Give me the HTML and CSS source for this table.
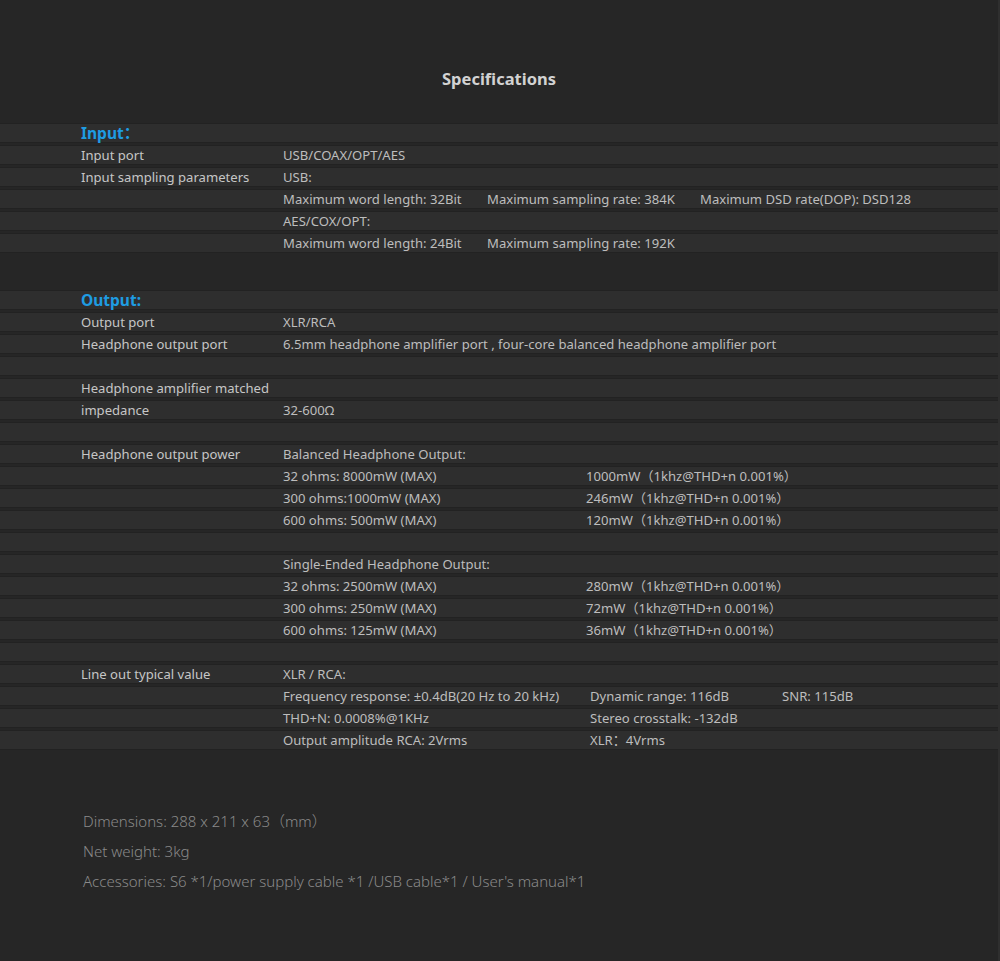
FILE: index.html
```html
<!DOCTYPE html>
<html lang="en">
<head>
  <meta charset="UTF-8" />
  <meta name="viewport" content="width=device-width, initial-scale=1.0" />
  <title>Specifications</title>
  <link rel="stylesheet" href="styles.css">
</head>
<body>
  <div class="page">
    <h1 class="title">Specifications</h1>

    <section class="spec">
      <div class="row"><span class="label head">Input：</span></div>
      <div class="row"><span class="label">Input port</span><span class="val">USB/COAX/OPT/AES</span></div>
      <div class="row"><span class="label">Input sampling parameters</span><span class="val">USB:</span></div>
      <div class="row">
        <span class="label"></span>
        <div class="val cols cols-usb">
          <span>Maximum word length: 32Bit</span>
          <span>Maximum sampling rate: 384K</span>
          <span>Maximum DSD rate(DOP): DSD128</span>
        </div>
      </div>
      <div class="row"><span class="label"></span><span class="val">AES/COX/OPT:</span></div>
      <div class="row">
        <span class="label"></span>
        <div class="val cols cols-usb">
          <span>Maximum word length: 24Bit</span>
          <span>Maximum sampling rate: 192K</span>
        </div>
      </div>
    </section>

    <section class="spec">
      <div class="row"><span class="label head">Output:</span></div>
      <div class="row"><span class="label">Output port</span><span class="val">XLR/RCA</span></div>
      <div class="row"><span class="label">Headphone output port</span><span class="val">6.5mm headphone amplifier port , four-core balanced headphone amplifier port</span></div>
      <div class="row"></div>
      <div class="row"><span class="label">Headphone amplifier matched</span></div>
      <div class="row"><span class="label">impedance</span><span class="val">32-600Ω</span></div>
      <div class="row"></div>

      <div class="row"><span class="label">Headphone output power</span><span class="val">Balanced Headphone Output:</span></div>
      <div class="row"><span class="label"></span><div class="val cols cols-pow"><span>32 ohms: 8000mW (MAX)</span><span>1000mW（1khz@THD+n 0.001%）</span></div></div>
      <div class="row"><span class="label"></span><div class="val cols cols-pow"><span>300 ohms:1000mW (MAX)</span><span>246mW（1khz@THD+n 0.001%）</span></div></div>
      <div class="row"><span class="label"></span><div class="val cols cols-pow"><span>600 ohms: 500mW (MAX)</span><span>120mW（1khz@THD+n 0.001%）</span></div></div>
      <div class="row"></div>
      <div class="row"><span class="label"></span><span class="val">Single-Ended Headphone Output:</span></div>
      <div class="row"><span class="label"></span><div class="val cols cols-pow"><span>32 ohms: 2500mW (MAX)</span><span>280mW（1khz@THD+n 0.001%）</span></div></div>
      <div class="row"><span class="label"></span><div class="val cols cols-pow"><span>300 ohms: 250mW (MAX)</span><span>72mW（1khz@THD+n 0.001%）</span></div></div>
      <div class="row"><span class="label"></span><div class="val cols cols-pow"><span>600 ohms: 125mW (MAX)</span><span>36mW（1khz@THD+n 0.001%）</span></div></div>
      <div class="row"></div>

      <div class="row"><span class="label">Line out typical value</span><span class="val">XLR / RCA:</span></div>
      <div class="row">
        <span class="label"></span>
        <div class="val cols cols-line">
          <span>Frequency response: ±0.4dB(20 Hz to 20 kHz)</span>
          <span>Dynamic range: 116dB</span>
          <span>SNR: 115dB</span>
        </div>
      </div>
      <div class="row"><span class="label"></span><div class="val cols cols-line"><span>THD+N: 0.0008%@1KHz</span><span>Stereo crosstalk: -132dB</span></div></div>
      <div class="row"><span class="label"></span><div class="val cols cols-line"><span>Output amplitude RCA: 2Vrms</span><span>XLR：4Vrms</span></div></div>
    </section>

    <div class="extra">
      <p>Dimensions: 288 x 211 x 63（mm）</p>
      <p>Net weight: 3kg</p>
      <p>Accessories: S6 *1/power supply cable *1 /USB cable*1 / User's manual*1</p>
    </div>
  </div>
</body>
</html>
```

FILE: styles.css
```css
body {
  margin: 0;
  background: #262626;
  font-family: 'Noto Sans', 'Noto Sans CJK SC', sans-serif;
  color: #c4c4c4;
}

.page {
  width: 1000px;
  height: 961px;
  padding-top: 66px;
  box-sizing: border-box;
  border-right: 2px solid #2f2f2f;
}

.title {
  margin: 0 0 32px;
  text-align: center;
  font-size: 16.5px;
  line-height: 26px;
  font-weight: 700;
  color: #d2d2d2;
}

.spec {
  margin-bottom: 39px;
}

.row {
  display: grid;
  grid-template-columns: 202px 1fr;
  height: 18px;
  margin-bottom: 4px;
  padding-left: 81px;
  background: #2e2e2e;
  box-shadow: 0 1px 0 #222, 0 -1px 0 #222;
  font-size: 13.1px;
  line-height: 18px;
  white-space: nowrap;
}

.label {
  color: #c6c6c6;
}

.head {
  color: #1e9ce2;
  font-size: 15.5px;
  font-weight: 700;
}

.val {
  color: #bdbdbd;
}

.cols {
  display: grid;
}

.cols-usb {
  grid-template-columns: 204px 213px auto;
}

.cols-pow {
  grid-template-columns: 303px auto;
}

.cols-line {
  grid-template-columns: 307px 192px auto;
}

.extra {
  padding: 18px 0 0 83px;
  color: #8a8a8a;
  font-size: 15px;
  font-weight: 300;
}

.extra p {
  margin: 0;
  line-height: 30px;
}
```
